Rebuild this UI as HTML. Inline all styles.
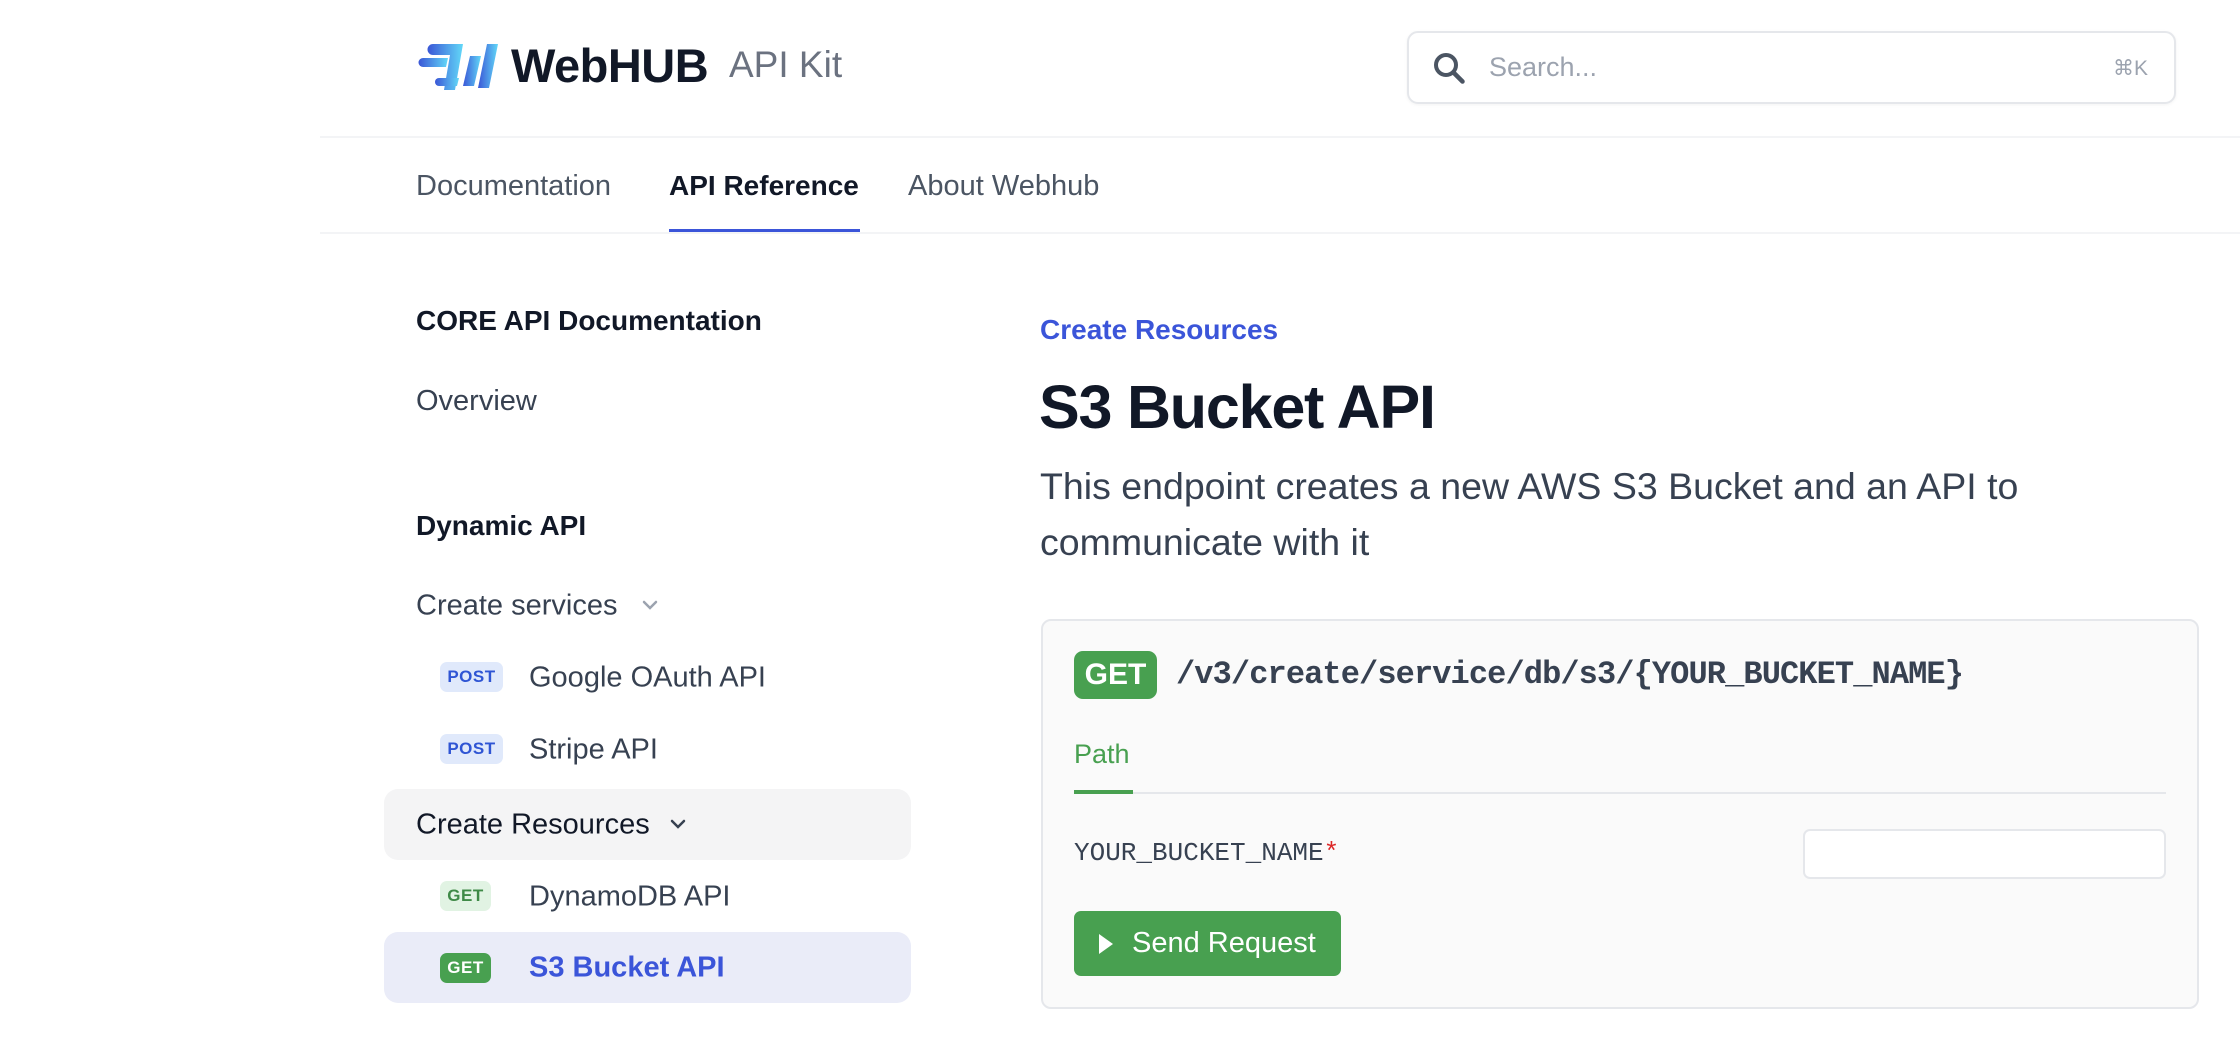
<!DOCTYPE html>
<html><head><meta charset="utf-8"><style>
*{margin:0;padding:0;box-sizing:border-box}
body{width:2240px;height:1046px;background:#fff;font-family:"Liberation Sans",Arial,sans-serif;position:relative;overflow:hidden;color:#374151}
.a{position:absolute;white-space:nowrap}
.hl{position:absolute;left:320px;right:0;height:2px;background:#f3f4f6}
.badge{position:absolute;height:30px;border-radius:7px;font-weight:700;font-size:17px;line-height:30px;text-align:center;letter-spacing:.5px}
.post{background:#e0e9fb;color:#2f55d4;width:63px}
.get{background:#e1f3e3;color:#3f8a47;width:51px}
.si{font-size:29px;color:#374151;transform:translateY(-50%)}
.mono{font-family:"Liberation Mono","DejaVu Sans Mono",monospace}
</style></head><body>
<svg class="a" style="left:410px;top:40px" width="100" height="56" viewBox="0 0 100 56">
<defs><linearGradient id="g" x1="0" x2="1"><stop offset="0" stop-color="#3a56d6"/><stop offset="1" stop-color="#62d8f8"/></linearGradient></defs>
<path fill="url(#g)" d="M23 4h30l-8 46h-11l6-35h-17a5.5 5.5 0 0 1 0-11z"/>
<path fill="url(#g)" d="M13 18h25l-2 9h-23a4.5 4.5 0 0 1 0-9z"/>
<path fill="url(#g)" d="M29 38h20l-2 8h-18a4 4 0 0 1 0-8z"/>
<path fill="url(#g)" d="M60 16h11l-7 30h-11z"/>
<path fill="url(#g)" d="M77 4h11l-9 44h-11z"/>
</svg>
<div class="a" style="left:511px;top:38px;font-size:47px;font-weight:700;color:#111827;letter-spacing:-0.5px">WebHUB</div>
<div class="a" style="left:729px;top:44px;font-size:37px;color:#6b7280">API Kit</div>

<div class="a" style="left:1407px;top:31px;width:769px;height:73px;border:2px solid #e5e7eb;border-radius:11px;box-shadow:0 1px 3px rgba(0,0,0,.05)"></div>
<svg class="a" style="left:1432px;top:51px" width="34" height="34" viewBox="0 0 34 34"><circle cx="14" cy="14" r="10" fill="none" stroke="#4b5563" stroke-width="4"/><path d="M21.5 21.5l9 9" stroke="#4b5563" stroke-width="4.5" stroke-linecap="round"/></svg>
<div class="a" style="left:1489px;top:52px;font-size:27px;color:#9ca3af">Search...</div>
<div class="a" style="left:2113px;top:56px;font-size:21px;color:#9ca3af">⌘K</div>

<div class="hl" style="top:136px"></div>
<div class="a" style="left:416px;top:170px;font-size:29px;color:#4b5563">Documentation</div>
<div class="a" style="left:669px;top:170px;font-size:28px;color:#111827;font-weight:700">API Reference</div>
<div class="a" style="left:908px;top:170px;font-size:29px;color:#4b5563">About Webhub</div>
<div class="a" style="left:669px;top:229px;width:191px;height:4px;background:#3b55d9"></div>
<div class="hl" style="top:232px"></div>

<div class="a" style="left:416px;top:305px;font-size:28px;font-weight:700;color:#111827">CORE API Documentation</div>
<div class="a" style="left:416px;top:385px;font-size:29px;color:#374151">Overview</div>
<div class="a" style="left:416px;top:510px;font-size:28px;font-weight:700;color:#111827">Dynamic API</div>
<div class="a si" style="left:416px;top:606px">Create services</div>
<svg class="a" style="left:641px;top:598px" width="18" height="14"><path d="M3 4l6 6 6-6" fill="none" stroke="#9ca3af" stroke-width="2.5" stroke-linecap="round"/></svg>
<div class="badge post" style="left:440px;top:662px">POST</div>
<div class="a si" style="left:529px;top:678px">Google OAuth API</div>
<div class="badge post" style="left:440px;top:734px">POST</div>
<div class="a si" style="left:529px;top:750px">Stripe API</div>
<div class="a" style="left:384px;top:789px;width:527px;height:71px;background:#f4f4f5;border-radius:14px"></div>
<div class="a si" style="left:416px;top:825px;color:#111827">Create Resources</div>
<svg class="a" style="left:669px;top:817px" width="18" height="14"><path d="M3 4l6 6 6-6" fill="none" stroke="#374151" stroke-width="2.5" stroke-linecap="round"/></svg>
<div class="badge get" style="left:440px;top:881px">GET</div>
<div class="a si" style="left:529px;top:897px">DynamoDB API</div>
<div class="a" style="left:384px;top:932px;width:527px;height:71px;background:#eaecf8;border-radius:14px"></div>
<div class="badge get" style="left:440px;top:953px;background:#48a050;color:#fff">GET</div>
<div class="a si" style="left:529px;top:968px;color:#3b55d9;font-weight:700">S3 Bucket API</div>

<div class="a" style="left:1040px;top:314px;font-size:28px;font-weight:700;color:#3b55d9">Create Resources</div>
<div class="a" style="left:1039px;top:372px;font-size:61px;font-weight:700;color:#111827;letter-spacing:-1.2px">S3 Bucket API</div>
<div class="a" style="left:1040px;top:458px;font-size:37.5px;line-height:56px;color:#374151;white-space:normal;width:1140px">This endpoint creates a new AWS S3 Bucket and an API to communicate with it</div>

<div class="a" style="left:1041px;top:619px;width:1158px;height:390px;background:#fafafa;border:2px solid #e5e7eb;border-radius:10px"></div>
<div class="a" style="left:1074px;top:651px;width:83px;height:48px;background:#48a050;border-radius:9px;color:#fff;font-weight:700;font-size:30px;line-height:48px;text-align:center">GET</div>
<div class="a mono" style="left:1176px;top:656px;font-size:32px;font-weight:700;color:#374151;letter-spacing:-0.9px">/v3/create/service/db/s3/{YOUR_BUCKET_NAME}</div>
<div class="a" style="left:1074px;top:739px;font-size:27px;color:#48a050">Path</div>
<div class="a" style="left:1074px;top:792px;width:1092px;height:2px;background:#e5e7eb"></div>
<div class="a" style="left:1074px;top:790px;width:59px;height:4px;background:#48a050"></div>
<div class="a mono" style="left:1074px;top:838px;font-size:26px;color:#374151">YOUR_BUCKET_NAME<span style="color:#dc2626">*</span></div>
<div class="a" style="left:1803px;top:829px;width:363px;height:50px;background:#fff;border:2px solid #e5e7eb;border-radius:7px"></div>
<div class="a" style="left:1074px;top:911px;width:267px;height:65px;background:#48a050;border-radius:7px"></div>
<svg class="a" style="left:1097px;top:932px" width="18" height="24"><path d="M2 2l14 10-14 10z" fill="#fff"/></svg>
<div class="a" style="left:1132px;top:927px;font-size:29px;color:#fff">Send Request</div>
</body></html>
